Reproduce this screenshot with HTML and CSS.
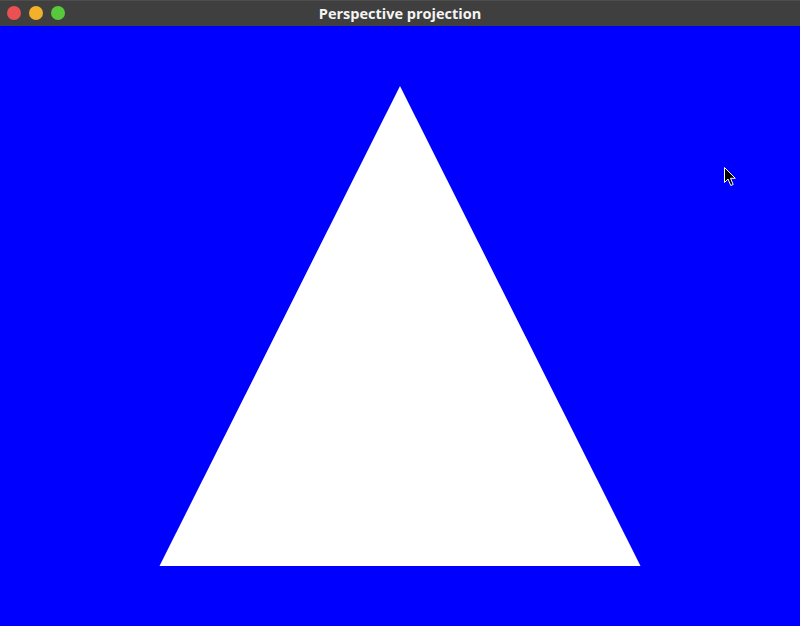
FILE: index.html
```html
<!DOCTYPE html>
<html>
<head>
<meta charset="utf-8">
<link rel="stylesheet" href="styles.css">
</head>
<body>
<div class="window">
  <div class="titlebar">
    <div class="buttons">
      <span class="btn close"></span>
      <span class="btn min"></span>
      <span class="btn max"></span>
    </div>
    <div class="title">Perspective projection</div>
  </div>
  <div class="canvas">
    <svg class="scene" width="800" height="600" viewBox="0 0 800 600">
      <polygon points="159.5,540 640.5,540 400,60" fill="#ffffff"/>
    </svg>
    <svg class="cursor" width="14" height="22" viewBox="0 0 14 22">
      <path d="M1.5 1.5 L1.5 16.5 L5 13 L7.8 19.5 L10.2 18.5 L7.5 12.3 L12.3 12.3 Z" fill="#000" stroke="#fff" stroke-width="1" stroke-linejoin="miter"/>
    </svg>
  </div>
</div>
</body>
</html>
```
FILE: styles.css
```css
html, body {
  margin: 0;
  padding: 0;
  background: #0000ff;
  overflow: hidden;
}
.window {
  width: 800px;
  height: 626px;
  display: flex;
  flex-direction: column;
}
.titlebar {
  height: 26px;
  flex: none;
  background: #3f3f3f;
  border-top: 1px solid #4d4d4d;
  box-sizing: border-box;
  position: relative;
  display: flex;
  align-items: center;
  justify-content: center;
}
.buttons {
  position: absolute;
  left: 7px;
  top: 5px;
  display: flex;
  gap: 8px;
}
.btn {
  width: 14px;
  height: 14px;
  border-radius: 50%;
  display: block;
}
.close { background: #eb5152; }
.min { background: #f3b02a; }
.max { background: #58c83c; }
.title {
  font-family: "Open Sans", "DejaVu Sans", sans-serif;
  font-weight: 700;
  font-size: 14.5px;
  color: #f4f4f4;
  margin-top: -1px;
}
.canvas {
  flex: 1;
  position: relative;
  background: #0000ff;
}
.scene {
  display: block;
}
.cursor {
  position: absolute;
  left: 723px;
  top: 140px;
}
```
